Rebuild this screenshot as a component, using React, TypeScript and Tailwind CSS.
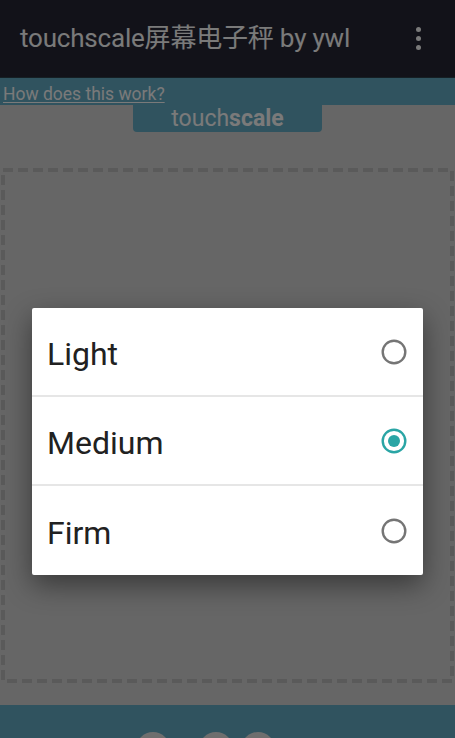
import React, { useState } from 'react';

const OPTIONS = ['Light', 'Medium', 'Firm'];

const Radio: React.FC<{ checked: boolean }> = ({ checked }) => (
  <svg width="26" height="26" viewBox="0 0 26 26" className="shrink-0">
    <circle cx="13" cy="13" r="11.3" fill="none" stroke={checked ? '#2aa5a5' : '#757575'} strokeWidth="2.4" />
    {checked && <circle cx="13" cy="13" r="6" fill="#2aa5a5" />}
  </svg>
);

const App: React.FC = () => {
  const [pressure, setPressure] = useState('Medium');

  return (
    <div
      className="relative w-[455px] h-[738px] overflow-hidden bg-[#cccccc]"
      style={{ fontFamily: 'Roboto, "Noto Sans CJK SC", sans-serif' }}
    >
      {/* App bar */}
      <div className="h-[77px] bg-[#242432] flex items-center justify-between pl-5 pr-[34px]">
        <h1 className="text-[26px] text-[#f4f4f4] tracking-[-0.2px]">touchscale屏幕电子秤 by ywl</h1>
        <div className="flex flex-col gap-[4px]">
          <span className="w-[5px] h-[5px] rounded-full bg-[#f4f4f4]" />
          <span className="w-[5px] h-[5px] rounded-full bg-[#f4f4f4]" />
          <span className="w-[5px] h-[5px] rounded-full bg-[#f4f4f4]" />
        </div>
      </div>

      {/* Help strip */}
      <div className="h-[28px] bg-[#60a6be] flex items-end pl-[3px] border-t border-[#2a3e48]">
        <a href="#" className="text-[17.5px] leading-[22px] text-[#f4f4f4] underline underline-offset-2">How does this work?</a>
      </div>

      {/* Scale area */}
      <div className="flex flex-col items-center">
        <div className="w-[189px] h-[27px] bg-[#60a6be] rounded-b-[4px] flex items-center justify-center text-[23px] text-[#f4f4f4] leading-none">
          touch<span className="font-bold">scale</span>
        </div>
        <div className="relative mt-[36px] ml-[1px] w-[453px] h-[515px] self-start">
          <svg className="absolute inset-0" width="453" height="515">
            <rect x="2" y="2" width="449" height="511" fill="none" stroke="#b4b4b4" strokeWidth="4" strokeDasharray="10 5" />
          </svg>
        </div>
      </div>

      {/* Bottom bar */}
      <div className="absolute left-0 right-0 top-[705px] h-[40px] bg-[#60a6be]">
        <span className="absolute left-[136px] top-[27px] w-[34px] h-[34px] rounded-full bg-[#dcdcdc]" />
        <span className="absolute left-[199px] top-[27px] w-[34px] h-[34px] rounded-full bg-[#dcdcdc]" />
        <span className="absolute left-[241px] top-[27px] w-[34px] h-[34px] rounded-full bg-[#dcdcdc]" />
      </div>

      {/* Dim overlay */}
      <div className="absolute inset-0 bg-black/50" />

      {/* Dialog */}
      <div className="absolute left-[32px] top-[308px] w-[391px] bg-white rounded-[2px] shadow-[0_10px_28px_rgba(0,0,0,0.45)]">
        {OPTIONS.map((opt, i) => (
          <button
            key={opt}
            onClick={() => setPressure(opt)}
            className={`w-full h-[89px] flex items-center justify-between pl-[15px] pr-[16px] text-left ${i < OPTIONS.length - 1 ? 'border-b-2 border-[#e6e6e6]' : ''}`}
          >
            <span className="text-[32px] text-[#212121] pt-[5px]">{opt}</span>
            <Radio checked={pressure === opt} />
          </button>
        ))}
      </div>
    </div>
  );
};

export default App;
